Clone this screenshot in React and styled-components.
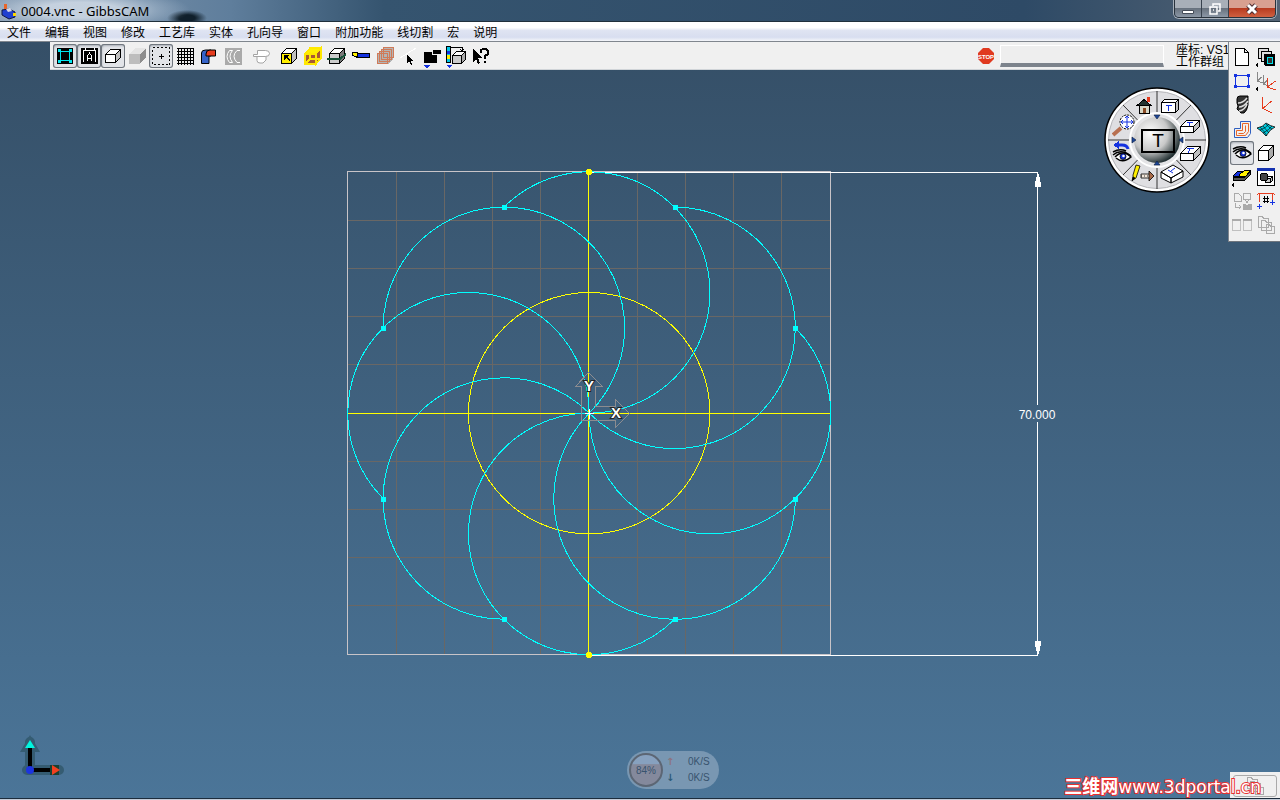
import { styled, createGlobalStyle } from "styled-components";

const menus = ["文件", "编辑", "视图", "修改", "工艺库", "实体", "孔向导", "窗口", "附加功能", "线切割", "宏", "说明"];

/* ---------- icons ---------- */

const Icon = ({ children }) => (
    <svg width="24" height="24" viewBox="0 0 24 24" shapeRendering="crispEdges" fill="none" stroke="#000" aria-hidden="true">
        {children}
    </svg>
)

const Box = ({ x = 4, y = 9, w = 11, h = 9, d = 5, front = "#fff", top = "#fff", side = "#c0c0c0", line = "#000" }) => (
    <g stroke={line} strokeLinejoin="round">
        <path fill={top} d={`M${x} ${y}l${d} ${-d}h${w}l${-d} ${d}z`} />
        <path fill={side} d={`M${x + w} ${y}l${d} ${-d}v${h}l${-d} ${d}z`} />
        <path fill={front} d={`M${x} ${y}h${w}v${h}h${-w}z`} />
    </g>
)

const Stack = ({ line = "#000", fill = "#ddd" }) => (
    <g stroke={line} fill={fill}>
        <path d="M4.500 3.500h10v10h-10z" />
        <path d="M7.500 6.500h10v10h-10z" />
        <path d="M10.500 9.500h10v10h-10z" />
    </g>
)

const Eye = ({ y = 0 }) => (
    <g transform={`translate(0 ${y})`} shapeRendering="auto">
        <path fill="#fff" d="M5 13q8-8 16 0q-8 7-15 1" strokeWidth="1.400" />
        <path d="M3 11q8-7 18 1M3 8q7-4 13-1" strokeWidth="1.500" />
        <circle cx="13" cy="12.500" r="3" fill="#1432d8" stroke="#000" strokeWidth=".8" />
        <circle cx="13.500" cy="12" r="1.300" fill="#fff" stroke="none" />
    </g>
)

const icons = {
    geometry: <><path fill="#000" stroke="none" d="M4 4h16v16H4z" /><path stroke="#00e5ee" d="M7.500 7.500h9v9h-9z" /><path fill="#00e5ee" stroke="none" d="M5 5h3v3H5zM16 5h3v3h-3zM5 16h3v3H5zM16 16h3v3h-3z" /></>,
    label: <><path fill="#000" stroke="none" d="M4 4h17v16H4z" /><path stroke="#fff" d="M6.500 18V6.500h12V18M8 4v3M17 4v3M10.500 17v-5l2-3 2 3v5M10 14.500h5" /></>,
    cube: <Box x={4.5} y={10.5} w={10} h={8} d={5} />,
    solid: <g stroke="none"><path fill="#e4e4e4" d="M4 10l6-6h11l-6 6z" /><path fill="#8e8e8e" d="M15 10l6-6v9l-6 7z" /><path fill="#bdbdbd" d="M4 10h11v10H4z" /></g>,
    points: <><path strokeDasharray="2 2" d="M3.500 3.500h17v17h-17z" /><path d="M12.500 10v5M10 12.500h5" /></>,
    grid: <path d="M4 4.500h17M4 7.500h17M4 10.500h17M4 13.500h17M4 16.500h17M4 19.500h17M5.500 4v17M8.500 4v17M11.500 4v17M14.500 4v17M17.500 4v17M20.500 4v17" />,
    part: <g shapeRendering="auto"><path fill="#3563c8" d="M4.500 19.500V9q0-3 4-3H14v6h-2v7.500z" /><path fill="#e63c1e" d="M9 10q0-4 4-4h5.500v6H9z" /></g>,
    arc: <><path fill="#aaa" stroke="none" d="M4 4h17v17H4z" /><path shapeRendering="auto" stroke="#fff" d="M8.500 6.500h3q-5 5.500 0 12h-3q-5-6 0-12M19 6.500h-3q-6 5.500 0 12h3" /></>,
    cylinder: <g stroke="#a4a4a4" fill="#fff" shapeRendering="auto"><path d="M8 12.500v4q0 2.500 3 2.500h3l3-3v-3.500z" /><path d="M8.500 6.500h8q4 0 4 3t-4 3h-12v-2h4z" /></g>,
    pick: <><Box x={4.5} y={9.5} w={10} h={10} d={5} front="#ffee00" /><path fill="#000" stroke="none" d="M7 11h5l-1 2 2 3-1 1-3-3-2 2z" /></>,
    wire: <g stroke="#ffe800" strokeWidth="1.500"><path fill="#fff000" d="M4 10l5-6h11l-5 6z" /><path fill="#a85a32" d="M4 10h11v10H4zM15 10l5-6v10l-5 6z" /><path d="M9 8v7h11M9 15l-5 5" /></g>,
    slice: <><Box x={4.5} y={9.5} w={10} h={10} d={5} front="#ccc" side="#777" /><path stroke="#165238" strokeWidth="2" d="M2 15h13l6-5" /></>,
    tool: <><path fill="#fff000" d="M3.500 8.500h5v5l-2-1-3-1z" /><path fill="#1432e0" d="M8.500 9.500h12v4h-12z" /></>,
    layers: <><path fill="#b4b4b4" stroke="none" d="M4 10l6-6h10v11l-5 5H4z" /><g stroke="#d07a58"><path d="M4.500 9.500h10v10h-10zM6.500 7.500h10v10h-10zM8.500 5.500h10v10h-10zM10.500 3.500h10v10h-10z" /></g></>,
    pointer: <><path stroke="#fff" d="M3 14L19 4" /><path fill="#000" stroke="none" d="M10 10v9l2-2 2 4 1-1-1-3h2z" /></>,
    blocks: <><path fill="#000" stroke="none" d="M3 8h13v11H3z" /><path fill="#000" stroke="#f0f0f0" d="M11.500 5.500h9v5h-9z" /><path fill="#1432e0" stroke="none" d="M2 21h7l-3 3z" /></>,
    scale: <><path fill="#00c8e8" d="M1.500 2.500h4v16h-4z" /><path stroke="none" fill="#fff000" d="M2 11h3v4H2z" /><path stroke="none" fill="#1432e0" d="M2 7h3v3H2zM1 21h6l-3 3z" /><path d="M6 3.500h11V7M15 5l2 2 2-2" /><Box x={7.500} y={11.500} w={9} h={8} d={4} front="#ccc" side="#aaa" /></>,
    help: <><path fill="#000" stroke="none" d="M4 5v13l3-3 2 5 2-1-2-5h4z" /><path strokeWidth="2" d="M12 9V6l2-1h3l2 2v3l-3 2v3M16 17v2" /></>,
    page: <path fill="#fff" d="M5.500 3.500h9l4 4v13h-13zM14.500 3.500v4h4" />,
    groups: <><Stack /><path fill="#000" d="M11.500 10.500h9v10h-9z" /><path stroke="#00e5ee" fill="#333" d="M13.500 12.500h5v6h-5z" /><path fill="#000" stroke="none" d="M4 17v5l-3-2z" /></>,
    rect: <><path stroke="#1432e0" d="M5.500 6.500h13v11h-13z" /><path fill="#1432e0" stroke="none" d="M4 5h3v3H4zM17 5h3v3h-3zM4 16h3v3H4zM17 16h3v3h-3z" /></>,
    systems: <><path stroke="#888" d="M3.500 3v9l5 2M3.500 12l4-4M9.500 6v9l5 2M9.500 15l4-4" /><path stroke="#e63c1e" d="M13.500 9v9l8 3M13.500 18l8-6" /><path fill="#000" stroke="none" d="M4 17v5l-3-2z" /></>,
    mill: <g shapeRendering="auto"><path fill="#333" d="M7 6q0-3 3-3h8v9q-1 6-4 8h-3l-4-4q2-3 0-6z" /><path stroke="#ddd" strokeWidth="1.500" d="M8 10q5 0 9-5M9 14q5 0 9-6M9 18q6-1 8-7" /></g>,
    axis: <path stroke="#e63c1e" d="M8.500 4v11l9 5M9.500 15l8-7" />,
    contour: <g shapeRendering="auto"><path stroke="#3060c0" d="M4.500 20.500v-9h6v-7h10v12l-3 4z" /><path stroke="#e8662a" d="M6.500 18.500v-5h6v-7h6v8l-3 4zM8.500 16.500h5l2-2v-6" /></g>,
    surface: <g shapeRendering="auto"><path fill="#00cce0" strokeWidth=".8" d="M3 11q6-1 9-5 4 3 9 4-5 2-9 9-4-5-9-8z" /><path strokeWidth=".6" d="M6 13q6-2 9-6M9 16q6-3 9-7M9 9q4 5 6 7M6 10q4 4 7 9M12 7q3 4 6 5" /></g>,
    eye: <Eye />,
    view: <Box x={4.500} y={9.500} w={10} h={10} d={5} side="#aaa" />,
    cut: <><path fill="#1432e0" d="M3 11l5-5h12l-6 6z" /><path fill="#fff000" d="M10 9l5-4h6l-5 6H9z" /><path fill="#555" d="M3.500 12.500h11l6-6v3l-6 6h-11z" /><path fill="#000" stroke="none" d="M4 17v6l-3-3z" /></>,
    render: <><path fill="#fff" d="M3.500 4.500h17v16h-17z" /><path fill="#1432b0" stroke="none" d="M3 3h18v3H3z" /><Box x={11.500} y={13.500} w={5} h={4} d={2} front="#ccc" /><circle cx="10" cy="12" r="4" fill="#444" /></>,
    post: <g stroke="#aaa"><path d="M4.500 4.500h4l3 3v5h-7zM5.500 14v4h5M9 16l2 2-2 2M13.500 4.500h7v6h-7zM15 10.500h4l-2 3z" /><path fill="#aaa" d="M13 15h2l2 2 2-2h2v5h-8z" /></g>,
    dim: <><path stroke="#e63c1e" d="M5.500 13V4.500h13V11M3 6l2-2M21 6l-2-2" /><path d="M10.500 7v7M13.500 7v7M9 9.500h6M9 12.500h6" /><path stroke="#1432e0" d="M5.500 15v5M3 17.500h5M18.500 11v5M16 13.500h5" /></>,
    windows: <g stroke="#aaa"><path d="M2.500 7v10.500h8V7M13.500 7v10.500h8V7" stroke="#c0c0c0" /><path strokeWidth="2" d="M2 7h9M13 7h9" /></g>,
    copies: <g stroke="#aaa" fill="#f0f0f0"><path d="M4.500 3.500h4l1 2h5v9h-10zM7.500 7.500h4l1 2h5v8h-10zM12.500 11.500h3l1 2h4v7h-8z" /></g>,
    home: <><path fill="#d8d8c8" d="M7.500 11h10v8h-10z" /><path fill="#22332f" d="M5 11.500l7-6 7 6z" /><path fill="#e63c1e" stroke="none" d="M15 3h3v5h-3z" /><path fill="#8a4a24" stroke="none" d="M11 14h3v5h-3z" /></>,
    zoom: <g shapeRendering="auto"><path stroke="#b87050" strokeWidth="4" d="M1 22l8-7" /><circle cx="15" cy="9" r="7" fill="#fff" strokeDasharray="2 1" /><path stroke="#1432e0" d="M15 3v12M9 9h12M13 5l2-2 2 2M13 13l2 2 2-2M11 7l-2 2 2 2M19 7l2 2-2 2" /></g>,
    lastView: <><Eye y={4} /><path shapeRendering="auto" stroke="#1432e0" strokeWidth="3" d="M7 5h5q5 0 6 4" /><path fill="#1432e0" stroke="none" d="M3 5l6-4v8z" /></>,
    edit: <g shapeRendering="auto" strokeWidth=".8"><path fill="#fff000" d="M5 2l4 1-4 12-3 2 0-5z" /><path fill="#000" d="M1 18l1-4 2 1z" /><path fill="#f4e8dc" d="M10 11h9v4h-9z" /><path strokeDasharray="1 2" d="M10 13h9" /><path fill="#a86a48" d="M18 8l5 5-5 5z" /></g>,
}

/* flat box with a T on one face, seen from different sides */
const TBox = ({ kind }) => (
    <Icon>
        {kind === "front" && <><Box x={3.500} y={8.500} w={14} h={10} d={3} /><path stroke="#1432e0" d="M8 11.500h6M10.500 11v6" /></>}
        {kind === "top" && <><Box x={1.500} y={13.500} w={13} h={6} d={6} /><path stroke="#1432e0" d="M8 9.500h6M11 9l-1 4" /></>}
        {kind === "right" && <><Box x={1.500} y={12.500} w={13} h={7} d={7} /><path stroke="#1432e0" d="M8 7.500h7M11 8l-2 4" /></>}
        {kind === "iso" && <g shapeRendering="auto"><path fill="#fff" d="M1 11l12-7 10 6-12 7zM1 11v6l10 5v-5zM11 17v5l12-6v-6z" /><path stroke="#1432e0" d="M8 9l5 3M11 10l4-3" /></g>}
    </Icon>
)

const toolbar = [
    { id: "geometry", label: "Geometry", on: true },
    { id: "label", label: "Labels", on: true },
    { id: "cube", label: "Wireframe", on: true },
    { id: "solid", label: "Shaded" },
    { id: "points", label: "Points", on: true },
    { id: "grid", label: "Grid" },
    { id: "part", label: "Part" },
    { id: "arc", label: "Arcs" },
    { id: "cylinder", label: "Cylinders", gap: 4 },
    { id: "pick", label: "Face select", gap: 4 },
    { id: "wire", label: "Edge select" },
    { id: "slice", label: "Slice" },
    { id: "tool", label: "Tool" },
    { id: "layers", label: "Layers" },
    { id: "pointer", label: "Pointer" },
    { id: "blocks", label: "Blocks" },
    { id: "scale", label: "Scale" },
    { id: "help", label: "Context help" },
]

const palette = ["page", "groups", "rect", "systems", "mill", "axis", "contour", "surface", "eye", "view", "cut", "render", "post", "dim", "windows", "copies"];

const wheel = [
    { x: 28, y: 7, label: "Home", icon: <Icon>{icons.home}</Icon> },
    { x: 54, y: 7, label: "Front", icon: <TBox kind="front" /> },
    { x: 75, y: 26, label: "Top", icon: <TBox kind="top" /> },
    { x: 75, y: 54, label: "Right", icon: <TBox kind="right" /> },
    { x: 56, y: 74, label: "Isometric", icon: <TBox kind="iso" /> },
    { x: 27, y: 76, label: "Edit", icon: <Icon>{icons.edit}</Icon> },
    { x: 6, y: 53, label: "Previous view", icon: <Icon>{icons.lastView}</Icon> },
    { x: 8, y: 26, label: "Zoom", icon: <Icon>{icons.zoom}</Icon> },
]

/* ---------- drawing ---------- */

const CX = 589.2;
const CY = 413.2;
const R = 120.7;

const polar = (deg, r) => {
    const a = (deg * Math.PI) / 180;
    return [CX + r * Math.cos(a), CY + r * Math.sin(a)];
}

const angles = [0, 45, 90, 135, 180, 225, 270, 315];
const reach = 2 * R * Math.cos(Math.PI / 8);
const gridSteps = [1, 2, 3, 4, 6, 7, 8, 9].map((n) => Math.ceil(n * 48.2));

const Drawing = () => (
    <DrawingSvg viewBox="0 42 1280 756" preserveAspectRatio="xMidYMid meet" fill="none" shapeRendering="crispEdges" role="img" aria-label="0004.vnc">
        <g stroke="#696765">
            {gridSteps.map((s) => <path key={s} d={`M${347.5 + s} 172v482M348 ${171.5 + s}h482`} />)}
        </g>
        <path stroke="#c8c4c8" d="M347.500 171.500h483v483h-483z" />
        <g stroke="#fff">
            <path d="M589 172.500h449M589 655.500h449M1037.500 172v233M1037.500 422v233" />
            <path fill="#fff" stroke="none" d="M1037 174h2l1 6 1 3v4h-6v-4l1-3zM1037 654h2l1-6 1-3v-4h-6v4l1 3z" />
        </g>
        <g stroke="#ff0">
            <path d="M348 413.500h482M588.500 172v483" />
            <circle cx={CX} cy={CY} r={R} />
        </g>
        <g stroke="#0ff">
            {angles.map((a) => {
                const [x, y] = polar(a - 22.5, reach);
                return <path key={a} d={`M${x} ${y}A${R} ${R} 0 1 1 ${CX} ${CY}`} />;
            })}
        </g>
        <g fill="#0ff">
            {angles.map((a) => {
                const [x, y] = polar(a - 22.5, reach);
                return <rect key={a} x={Math.round(x) - 2} y={Math.round(y) - 2} width="5" height="5" />;
            })}
        </g>
        <path fill="#ff0" d="M587 169h4v1h1v4h-1v1h-4v-1h-1v-4h1zM587 652h4v1h1v4h-1v1h-4v-1h-1v-4h1z" />
        <path stroke="#8c8c90" d="M581.500 420.500v-34h-6l13-14 14 14h-7v20h20v-7l14 14-14 14v-7z" />
        <path stroke="#fff" d="M589.500 409v10M585 413.500h9" />
        <AxisLabel x="589" y="391">Y</AxisLabel>
        <AxisLabel x="616" y="418">X</AxisLabel>
        <DimText x="1037" y="419">70.000</DimText>
        <g shapeRendering="auto">
            <g stroke="#355c72" strokeWidth="10" strokeLinecap="round">
                <path d="M30 770V742M27 770h32" />
            </g>
            <path fill="#355c72" d="M20 752l10-17 10 17z" />
            <path stroke="#000" strokeWidth="4" d="M30 770V747M30 770h23" />
            <path fill="#00f5e0" d="M25 748l5-8 5 8z" />
            <path fill="#174032" d="M50 765h9v10h-9z" />
            <path fill="#f04020" d="M52 765l8 5-8 5z" />
            <circle cx="30" cy="770" r="4" fill="#1c34e0" />
        </g>
    </DrawingSvg>
)

const Wheel = () => (
    <WheelWrap role="group" aria-label="View control">
        <WheelFace viewBox="0 0 106 106" fill="none" aria-hidden="true">
            <defs>
                <radialGradient id="ball" cx=".35" cy=".35" r=".7">
                    <stop offset="0" stopColor="#fff" />
                    <stop offset=".55" stopColor="#c9c9c9" />
                    <stop offset="1" stopColor="#1c2a2c" />
                </radialGradient>
            </defs>
            <circle cx="53" cy="53" r="52" fill="#fff" stroke="#000" strokeWidth="1.500" />
            <circle cx="53" cy="53" r="48.500" fill="#dfdfe2" stroke="#b4b4b8" />
            <path stroke="#333" d="M53 4v98M4 53h98M19 18l68 70M87 18L19 88" />
            <circle cx="53" cy="53" r="27" fill="#e4e4e6" stroke="#fff" strokeWidth="2" />
            <circle cx="53" cy="53" r="23" fill="url(#ball)" />
            <g fill="#1c4698" stroke="#0c1c40" strokeWidth=".6">
                <path d="M50 28h6l-3 4zM50 78h6l-3-4zM28 50v6l4-3zM79 50v6l-4-3z" />
            </g>
        </WheelFace>
        {wheel.map((w) => (
            <WheelButton key={w.label} $x={w.x} $y={w.y} aria-label={w.label}>{w.icon}</WheelButton>
        ))}
        <WheelCenter>T</WheelCenter>
    </WheelWrap>
)

const App = () => {
    return (
    <Window>
        <GlobalStyle />
        <TitleBar>
            <AppIcon viewBox="0 0 16 18" aria-hidden="true">
                <path fill="#e8662a" d="M3 2h3v7H3z" />
                <path fill="#2040d0" stroke="#101840" d="M1 8l7-1 6 3v5l-6 2-7-4z" />
                <path fill="#d8d8e8" d="M5 7l4-1 2 3-4 1z" />
                <path fill="#ffd800" d="M12 11h3v3h-3z" />
            </AppIcon>
            <Title>0004.vnc - GibbsCAM</Title>
            <WindowButtons>
                <WindowButton aria-label="Minimize">
                    <svg width="12" height="12" aria-hidden="true"><path fill="#fff" stroke="#444c58" d="M.5 7.500h11v3H.5z" /></svg>
                </WindowButton>
                <WindowButton aria-label="Restore">
                    <svg width="12" height="12" fill="none" stroke="#fff" strokeWidth="1.500" aria-hidden="true"><path d="M4 3V1h7v7H9M1 4h7v7H1zM4 7h1" /></svg>
                </WindowButton>
                <WindowButton $close aria-label="Close">
                    <svg width="14" height="12" fill="none" aria-hidden="true">
                        <path stroke="#4c2c30" strokeWidth="5" d="M3 2l8 8M11 2l-8 8" />
                        <path stroke="#fff" strokeWidth="3" d="M3 2l8 8M11 2l-8 8" />
                    </svg>
                </WindowButton>
            </WindowButtons>
        </TitleBar>
        <MenuBar>
            {menus.map((m) => <MenuItem key={m}>{m}</MenuItem>)}
        </MenuBar>
        <Workspace>
            <Drawing />
            <Toolbar>
                {toolbar.map((t) => (
                    <ToolButton key={t.id} $on={t.on} $gap={t.gap} aria-label={t.label} aria-pressed={!!t.on}>
                        <Icon>{icons[t.id]}</Icon>
                    </ToolButton>
                ))}
                <Status>
                    <StopButton aria-label="Stop processing">
                        <StopSign viewBox="0 0 16 16">
                            <path fill="#e03a20" d="M5 0h6l5 5v6l-5 5H5l-5-5V5z" />
                            <text x="8" y="10.500" textAnchor="middle" fill="#fff" fontSize="6" fontWeight="700" fontFamily="Liberation Sans, sans-serif">STOP</text>
                        </StopSign>
                    </StopButton>
                    <Progress readOnly aria-label="Progress" />
                    <Coords>
                        <div>座标: VS1</div>
                        <div>工作群组</div>
                    </Coords>
                </Status>
            </Toolbar>
            <Palette>
                {palette.map((id) => (
                    <ToolButton key={id} $on={id === "eye"} aria-label={id}>
                        <Icon>{icons[id]}</Icon>
                    </ToolButton>
                ))}
            </Palette>
            <Wheel />
            <Gadget>
                <Percent>84%</Percent>
                <Speeds>
                    <Arrow $up>↑</Arrow><span>0K/S</span>
                    <Arrow>↓</Arrow><span>0K/S</span>
                </Speeds>
            </Gadget>
            <Corner>
                <CornerButton aria-label="Windows">
                    <Icon>{icons.copies}</Icon>
                </CornerButton>
            </Corner>
            <Watermark><b>三维网</b>www.3dportal.cn</Watermark>
        </Workspace>
        <BottomEdge />
    </Window>
    )
}

const GlobalStyle = createGlobalStyle`
    * { box-sizing: border-box; }
    body { margin: 0; font-family: "Noto Sans", "Noto Sans CJK SC", sans-serif; font-size: 12px; color: #000; }
    button { font: inherit; color: inherit; padding: 0; border: 0; background: none; }
    svg { display: block; }
`;
const Window = styled.div`display: flex; flex-direction: column; min-height: 100vh; overflow: hidden;`;

const TitleBar = styled.header`display: flex; align-items: center; height: 22px; padding-right: 4px; border-bottom: 1px solid #20303c;
    background: radial-gradient(ellipse 110px 22px at 80px 10px, rgba(222,230,240,.75) 35%, rgba(200,215,230,.35) 70%, transparent 100%), radial-gradient(ellipse 20px 8px at 187px 18px, #10202c 40%, transparent), linear-gradient(90deg, #8499b0 0, #5f7e9c 18%, #35546f 30%, #2e4a66 80%, #536374 100%);`;
const AppIcon = styled.svg`width: 18px; height: 18px; flex: none;`;
const Title = styled.h1`flex: 1; margin: 0 0 0 3px; font: 400 13px/20px "Noto Sans", sans-serif;`;
const WindowButtons = styled.div`display: flex; align-self: flex-start; height: 18px; border: 1px solid #28323c; border-top: 0; border-radius: 0 0 5px 5px; overflow: hidden; box-shadow: 0 0 0 1px #a8b0ba;`;
const WindowButton = styled.button`display: flex; align-items: center; justify-content: center; width: ${(p) => (p.$close ? 46 : 27)}px; border-right: ${(p) => (p.$close ? "0" : "1px solid #38424e")};
    background: ${(p) => (p.$close ? "linear-gradient(#d8a090 0 45%, #b83c20 50%, #d06040)" : "linear-gradient(#a8afb8 0 45%, #68727e 50%, #8c98a6)")};`;

const MenuBar = styled.nav`display: flex; align-items: center; gap: 14px; height: 20px; padding: 0 7px; border-bottom: 1px solid #80868e; background: linear-gradient(#fff 0 30%, #dfe4f2 45%, #d8def0 80%, #f4f6fa);`;
const MenuItem = styled.button`font: 12px/18px "Noto Sans CJK SC", sans-serif; white-space: nowrap;`;

const Workspace = styled.main`position: relative; flex: 1; display: grid; grid-template-columns: 50px 1fr 52px; grid-template-rows: auto 1fr; background: linear-gradient(#354f67, #4b7598);`;
const DrawingSvg = styled.svg`grid-area: 1 / 1 / -1 / -1; width: 100%; height: 100%; min-height: 0;`;
const AxisLabel = styled.text`font: 700 15px "Liberation Sans", sans-serif; fill: #fff; stroke: #222; stroke-width: 2px; paint-order: stroke; text-anchor: middle;`;
const DimText = styled.text`font: 12px "Liberation Sans", sans-serif; fill: #fff; text-anchor: middle;`;

const Toolbar = styled.div`grid-area: 1 / 2 / 2 / 3; align-self: start; display: flex; align-items: center; height: 28px; padding-left: 3px; background: #f0f0f0; border-bottom: 1px solid #d0d4d8;`;
const ToolButton = styled.button`display: flex; flex: none; width: 24px; height: 24px; margin-left: ${(p) => p.$gap || 0}px; border-radius: 3px;
    ${(p) => p.$on && "background: #e2e4e8; box-shadow: inset 0 0 0 1px #70767e, inset 1px 2px 2px #aab0b8;"}`;
const Status = styled.div`display: flex; align-items: center; margin-left: auto;`;
const StopButton = styled.button`width: 16px; height: 16px; margin-right: 6px;`;
const StopSign = styled.svg`width: 16px; height: 16px;`;
const Progress = styled.input`width: 164px; height: 22px; padding: 0; border: 1px solid #fff; border-bottom: 4px solid #7c838c; outline: 0; background: #eee;`;
const Coords = styled.div`width: 52px; margin-left: 12px; white-space: nowrap; font: 12px/12px "Liberation Sans", "Noto Sans CJK SC", sans-serif;`;

const Palette = styled.aside`grid-area: 1 / 3 / -1 / 4; align-self: start; display: grid; grid-template-columns: 24px 24px; padding: 3px 1px 4px; border-left: 1px solid #80868e; border-bottom: 1px solid #70767e; background: #f0f0f0;`;

const WheelWrap = styled.div`position: absolute; top: 45px; right: 70px; width: 106px; height: 106px;`;
const WheelFace = styled.svg`width: 100%; height: 100%;`;
const WheelButton = styled.button`position: absolute; left: ${(p) => p.$x}px; top: ${(p) => p.$y}px; width: 24px; height: 24px;`;
const WheelCenter = styled.button`&& { position: absolute; left: 37px; top: 42px; width: 34px; height: 24px; border: 2px solid #000; font: 19px/18px "Liberation Sans", sans-serif; }`;

const Gadget = styled.div`position: absolute; left: 50%; bottom: 9px; display: flex; align-items: center; width: 92px; height: 38px; margin-left: -13px; padding-left: 2px; border-radius: 19px; background: #7997b2; color: #38536e;`;
const Percent = styled.div`display: flex; align-items: center; justify-content: center; width: 34px; height: 34px; border: 2px solid #5c6674; border-radius: 50%; background: linear-gradient(#87a1bf 30%, #84899c 32%); font: 10px "Liberation Sans", sans-serif;`;
const Speeds = styled.div`display: grid; grid-template-columns: 22px auto; gap: 2px 0; margin-left: 3px; font: 10px/14px "Liberation Sans", sans-serif;`;
const Arrow = styled.b`color: ${(p) => (p.$up ? "#8c7480" : "#2c5a78")}; font-family: "DejaVu Sans", sans-serif;`;

const Corner = styled.div`position: absolute; right: 0; bottom: 0; width: 50px; height: 26px; padding: 3px; background: #f0f0f0;`;
const CornerButton = styled.button`&& { display: flex; justify-content: center; align-items: center; width: 44px; height: 22px; border: 1px solid #aaa; border-radius: 3px; overflow: hidden; }`;
const Watermark = styled.div`position: absolute; right: 19px; bottom: 1px; white-space: nowrap; font: 17px/20px "DejaVu Sans", sans-serif; color: #fff; -webkit-text-stroke: 2px #e83030; paint-order: stroke fill;
    b { font: 700 18px/20px "Noto Sans CJK SC", sans-serif; }`;
const BottomEdge = styled.footer`height: 2px; background: #c4ccd8; border-top: 1px solid #1c2c3c;`;

export default App
